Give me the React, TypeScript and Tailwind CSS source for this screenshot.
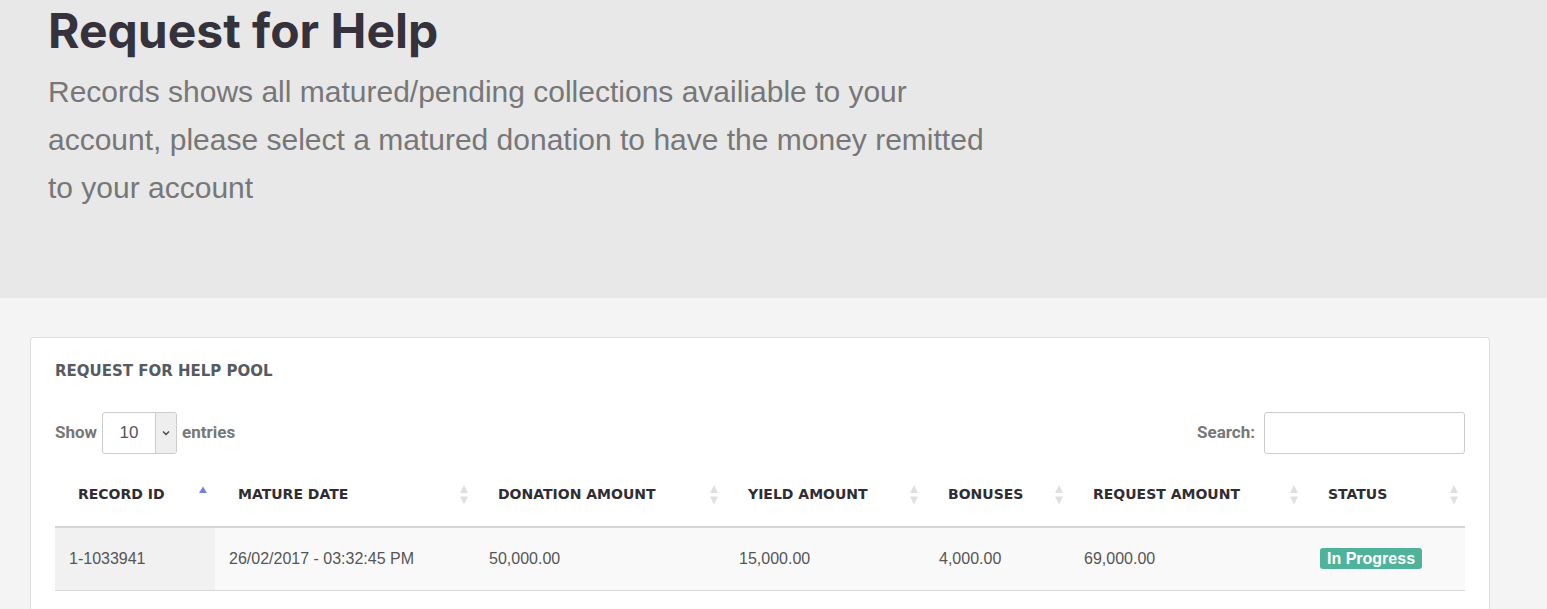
const columns = [
  { label: 'Record ID', w: 'w-[160px]', active: true },
  { label: 'Mature Date', w: 'w-[260px]' },
  { label: 'Donation Amount', w: 'w-[250px]' },
  { label: 'Yield Amount', w: 'w-[200px]' },
  { label: 'Bonuses', w: 'w-[145px]' },
  { label: 'Request Amount', w: 'w-[235px]' },
  { label: 'Status', w: 'w-[160px]' },
]

function SortIcon({ active }: { active?: boolean }) {
  if (active) {
    return (
      <svg width="10" height="22" viewBox="0 0 10 22" className="absolute right-[7px] top-[calc(50%-2px)] -translate-y-1/2">
        <path d="M1 9 L5 2.5 L9 9 Z" fill="#7480dc" />
      </svg>
    )
  }
  return (
    <svg width="10" height="22" viewBox="0 0 10 22" className="absolute right-[6px] top-[calc(50%-2px)] -translate-y-1/2">
      <path d="M1 9 L5 1 L9 9 Z" fill="#e0e0e0" />
      <path d="M1 12.5 L5 20.5 L9 12.5 Z" fill="#e0e0e0" />
    </svg>
  )
}

export default function App() {
  const head = { fontFamily: 'Inter, "Noto Sans", sans-serif' }
  const wide = { fontFamily: '"DejaVu Sans", Verdana, sans-serif' }
  const body = { fontFamily: '"Liberation Sans", Arial, sans-serif' }
  return (
    <div className="min-h-[609px] bg-[#f4f4f4]" style={body}>
      <div className="h-[298px] bg-[#e8e8e8] px-[48px] pt-[3px]">
        <h1 className="text-[48px] font-bold leading-[56px] text-[#35323c]" style={head}>
          Request for Help
        </h1>
        <p className="mt-[9px] w-[960px] text-[30px] leading-[48px] text-[#777777]">
          Records shows all matured/pending collections availiable to your account, please select a matured donation to have the money remitted to your account
        </p>
      </div>

      <div className="px-[30px] pt-[39px]">
        <div className="w-[1460px] rounded-t-[4px] border border-b-0 border-[#dddddd] bg-white px-[24px] pt-[24px] pb-[18px]">
          <h3 className="text-[15px] font-bold leading-[18px] text-[#555b60]" style={wide}>
            REQUEST FOR HELP POOL
          </h3>

          <div className="mt-[32px] flex items-center justify-between" style={{ fontFamily: 'Roboto, sans-serif' }}>
            <div className="flex items-center gap-[5px] text-[17px] font-bold text-[#777777]">
              <span>Show</span>
              <div className="flex h-[42px] w-[75px] overflow-hidden rounded-[3px] border border-[#cccccc]">
                <div className="flex flex-1 items-center justify-center text-[17px] font-normal text-[#555555]" style={body}>
                  10
                </div>
                <div className="flex w-[21px] items-center justify-center border-l border-[#cccccc] bg-[#eeeeee]">
                  <svg width="8" height="6" viewBox="0 0 8 6">
                    <path d="M1 1.5 L4 4.5 L7 1.5" stroke="#444" strokeWidth="1.3" fill="none" />
                  </svg>
                </div>
              </div>
              <span>entries</span>
            </div>
            <div className="flex items-center gap-[9px] text-[17px] font-bold text-[#777777]">
              <span>Search:</span>
              <input className="h-[42px] w-[201px] rounded-[3px] border border-[#cccccc] outline-none" />
            </div>
          </div>

          <table className="mt-[13px] w-[1410px] table-fixed border-collapse">
            <thead>
              <tr className="border-b-2 border-[#d6d6d6]">
                {columns.map((c) => (
                  <th
                    key={c.label}
                    className={`${c.w} relative h-[60px] pb-[4px] pl-[23px] text-left text-[14px] font-bold uppercase text-[#2f2d33]`}
                    style={wide}
                  >
                    {c.label}
                    <SortIcon active={c.active} />
                  </th>
                ))}
              </tr>
            </thead>
            <tbody>
              <tr className="h-[63px] border-b border-[#d6d6d6] bg-[#f9f9f9] text-[16px] text-[#555555]">
                <td className="bg-[#f1f1f1] pl-[14px]">1-1033941</td>
                <td className="pl-[14px]">26/02/2017 - 03:32:45 PM</td>
                <td className="pl-[14px]">50,000.00</td>
                <td className="pl-[14px]">15,000.00</td>
                <td className="pl-[14px]">4,000.00</td>
                <td className="pl-[14px]">69,000.00</td>
                <td className="pl-[15px]">
                  <span className="inline-block rounded-[3px] bg-[#4fb39b] px-[7px] text-[16px] font-bold leading-[21px] text-white">
                    In Progress
                  </span>
                </td>
              </tr>
            </tbody>
          </table>
        </div>
      </div>
    </div>
  )
}
